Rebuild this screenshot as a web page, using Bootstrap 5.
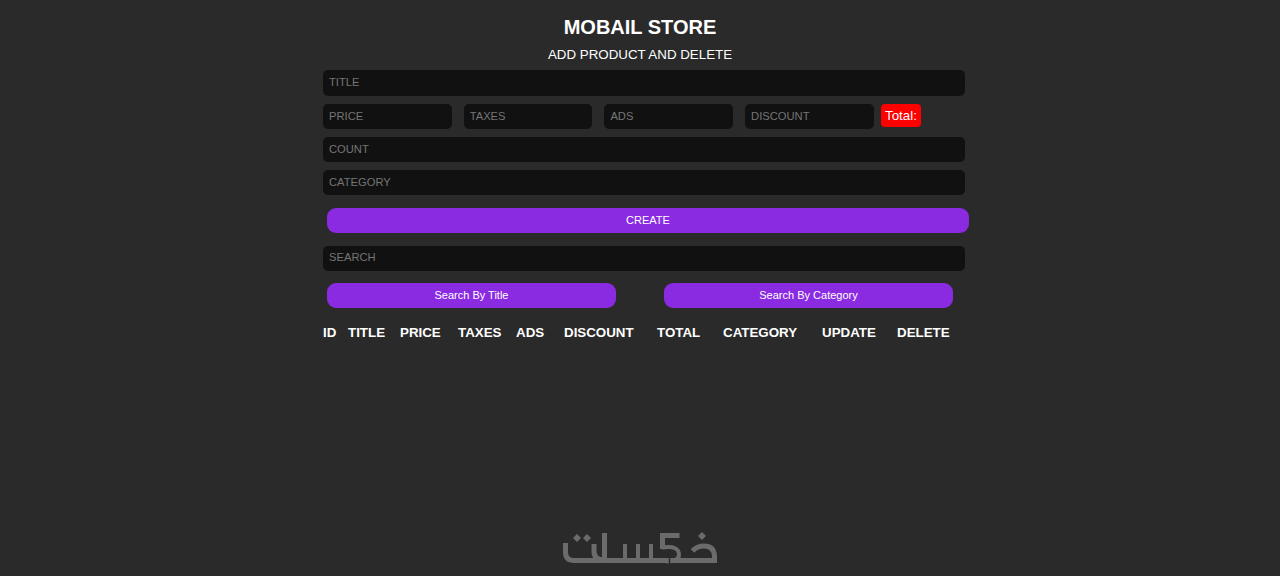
<!DOCTYPE html>
<html lang="en">
<head>
  <meta charset="UTF-8" />
  <title>Mobail Store</title>
  <link href="https://cdn.jsdelivr.net/npm/bootstrap@5.3.0/dist/css/bootstrap.min.css" rel="stylesheet" />
  <style>
    html, body { height: 100%; }
    body { background: #2a2a2a; color: #fff; font-family: "Liberation Sans", Arial, sans-serif; overflow: hidden; }
    .store-wrap { width: 634px; margin: 0 auto; }
    .store-head { padding-top: 14px; text-align: center; }
    .store-head h2 { font-size: 20px; line-height: 26px; font-weight: 700; margin: 0 0 7px; }
    .store-head h4 { font-size: 13.33px; line-height: 16px; font-weight: 400; margin: 0 0 7px; }
    .field { display: block; width: 642px; height: 25px; background: #111; border: 0; border-radius: 5px; padding: 0 6px 1px; font-size: 11.2px; color: #fff; outline: 0; }
    .field::placeholder { color: #757575; opacity: 1; }
    .field-row { margin-bottom: 8px; }
    .field-tall { height: 26px; padding-bottom: 3px; }
    .field-search { padding-bottom: 3px; }
    .price-row { display: flex; align-items: flex-start; gap: 12px; }
    .price-row .field { width: 128.7px; flex: none; }
    .total-tag { background: #f00; border-radius: 4px; font-size: 13.33px; line-height: 23px; height: 23px; width: 40px; text-align: center; margin-left: -4.8px; }
    .store-btn { display: block; height: 25px; background: #8a2be2; color: #fff; border: 0; border-radius: 9px; font-size: 11px; padding: 0; }
    .btn-create { width: 642px; margin: 13px 0 13px 4px; }
    .search-btns { display: flex; gap: 48px; margin: 12px 0 0 4px; }
    .search-btns .store-btn { width: 289px; }
    .head-table { margin-top: 12px; display: flex; font-size: 13.33px; font-weight: 700; line-height: 25px; width: 642px; }
    .head-table span { flex: none; white-space: nowrap; }
    .site-mark { position: absolute; left: 560px; top: 530px; }
  </style>
</head>
<body>
  <div class="store-wrap">
    <div class="store-head">
      <h2>MOBAIL STORE</h2>
      <h4>ADD PRODUCT AND DELETE</h4>
    </div>
    <input class="field field-row field-tall" type="text" placeholder="TITLE">
    <div class="price-row field-row">
      <input class="field" type="text" placeholder="PRICE">
      <input class="field" type="text" placeholder="TAXES">
      <input class="field" type="text" placeholder="ADS">
      <input class="field" type="text" placeholder="DISCOUNT">
      <small class="total-tag">Total:</small>
    </div>
    <input class="field field-row" type="text" placeholder="COUNT">
    <input class="field" type="text" placeholder="CATEGORY">
    <button class="store-btn btn-create">CREATE</button>
    <input class="field field-search" type="text" placeholder="SEARCH">
    <div class="search-btns">
      <button class="store-btn">Search By Title</button>
      <button class="store-btn">Search By Category</button>
    </div>
    <div class="head-table">
      <span style="width:25px">ID</span>
      <span style="width:52px">TITLE</span>
      <span style="width:58px">PRICE</span>
      <span style="width:58px">TAXES</span>
      <span style="width:48px">ADS</span>
      <span style="width:93px">DISCOUNT</span>
      <span style="width:66px">TOTAL</span>
      <span style="width:99px">CATEGORY</span>
      <span style="width:75px">UPDATE</span>
      <span>DELETE</span>
    </div>
  </div>

  <svg class="site-mark" width="160" height="36" viewBox="560 530 160 36" fill="none" stroke="#6b6b6b" stroke-width="5">
    <path d="M565.5 543V552Q565.5 560.5 574 560.5H714.5V556Q714 546 704 546Q697 546 692.5 551" />
    <path d="M594 544V551Q594 560 604 560M604.5 533V560" />
    <path stroke-width="4" d="M625 544V560M638 544V560M651 544V560" />
    <path d="M660 535.5H679.5" />
    <path stroke-width="5" d="M662.5 533V549" />
    <path stroke-width="4" d="M662 547.5C674 545.5 679 549 679 554.5C679 559 675 561.5 666 561.5" />
    <path stroke="#2a2a2a" stroke-width="1.5" d="M669.5 549V564" />
    <path fill="#6b6b6b" stroke="none" d="M577 534l4 4-4 4-4-4zM587 534l4 4-4 4-4-4zM702 532l4 4-4 4-4-4z" />
  </svg>
</body>
</html>
